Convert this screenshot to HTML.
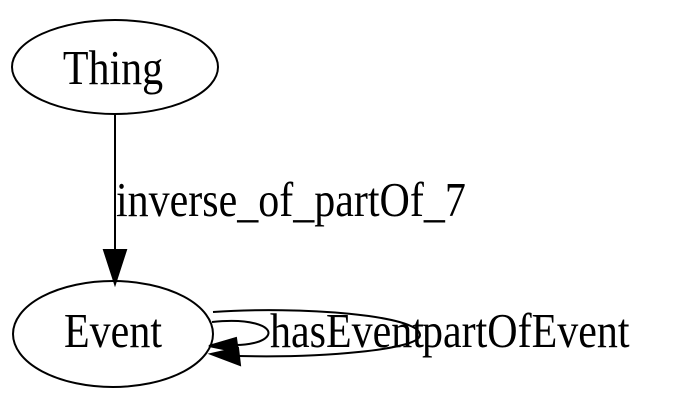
<!DOCTYPE html>
<html><head><style>html,body{margin:0;padding:0;background:#fff;width:700px;height:401px;overflow:hidden}</style></head>
<body>
<svg width="700" height="401" viewBox="0 0 700 401" xmlns="http://www.w3.org/2000/svg" font-family="Liberation Serif, serif" font-size="42">
<ellipse cx="115" cy="67" rx="103" ry="47" fill="none" stroke="#000" stroke-width="2"/>
<text transform="translate(113,84) scale(1,1.15)" text-anchor="middle">Thing</text>
<ellipse cx="113" cy="334" rx="100" ry="53" fill="none" stroke="#000" stroke-width="2"/>
<text transform="translate(113,347) scale(1,1.15)" text-anchor="middle">Event</text>
<line x1="115" y1="114" x2="115" y2="250" stroke="#000" stroke-width="2"/>
<polygon points="104,250 126,250 115,284" fill="#000" stroke="#000" stroke-width="2"/>
<text transform="translate(116,216) scale(1,1.15)">inverse_of_partOf_7</text>
<path d="M212,322 C250,318 272,326 268,335 C264,343 245,345 236,345" fill="none" stroke="#000" stroke-width="2"/>
<polygon points="236,338 238,352 209,346" fill="#000" stroke="#000" stroke-width="2"/>
<text transform="translate(270,347) scale(1,1.15)">hasEvent</text>
<path d="M213,312 C300,306 420,315 420,335 C420,350 320,358 238,356" fill="none" stroke="#000" stroke-width="2"/>
<polygon points="238,348 240,365 211,354" fill="#000" stroke="#000" stroke-width="2"/>
<text transform="translate(422,347) scale(1,1.15)">partOfEvent</text>
</svg>
</body></html>
